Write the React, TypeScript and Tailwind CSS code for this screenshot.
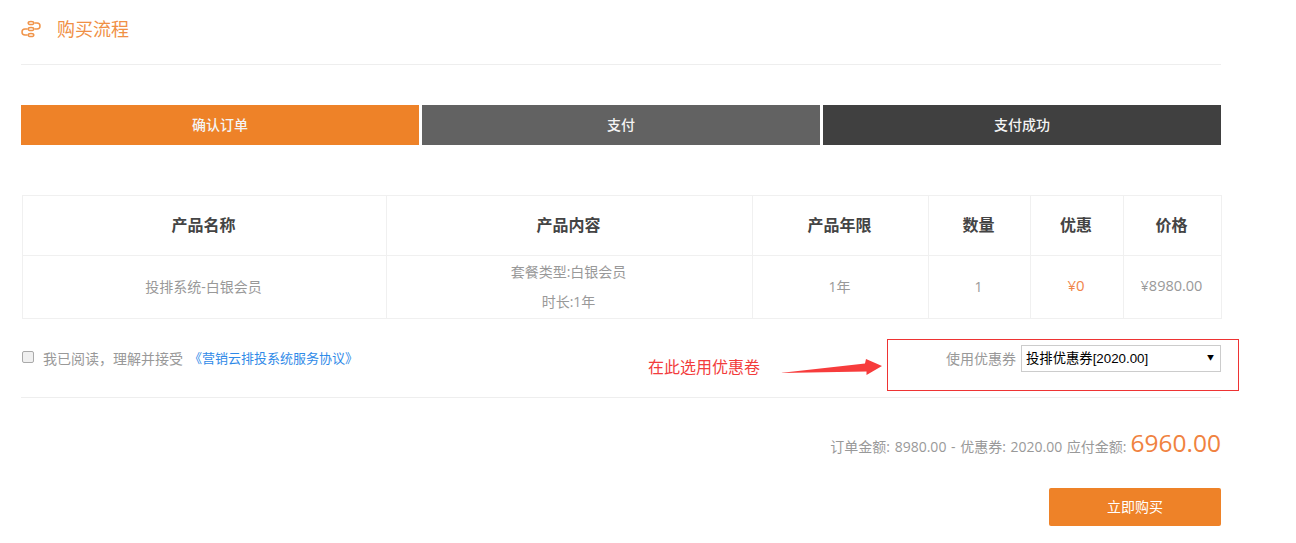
export default function App() {
  const th = "border border-[#f0f0f0] text-[16px] font-bold text-[#444] text-center p-0 pb-[2px] pr-[2px]";
  const td = "border border-[#f0f0f0] text-[14px] text-[#999] text-center p-0 pr-[2px]";
  return (
    <div className="relative w-[1296px] h-[543px] bg-white overflow-hidden font-['Open_Sans','Noto_Sans_CJK_SC',sans-serif]">
      <div className="w-[1200px] ml-[21px]">
        <div className="h-[65px] border-b border-[#eeeeee] flex items-start pt-[15px]">
          <svg width="20" height="20" viewBox="0 0 20 20" fill="none" stroke="#f0944a" strokeWidth="1.5" className="mt-[5px]">
            <ellipse cx="10" cy="3" rx="2.8" ry="1.6" />
            <ellipse cx="10" cy="9" rx="2.8" ry="1.6" />
            <ellipse cx="10" cy="15" rx="2.8" ry="1.6" />
            <path d="M13.5 3H16a3 3 0 0 1 0 6H13.5M6.5 9H4a3 3 0 0 0 0 6H6.5" />
          </svg>
          <span className="ml-[16px] text-[18px] leading-[28px] text-[#f08f45]">购买流程</span>
        </div>
        <div className="mt-[40px] h-[40px] flex gap-[3px] text-[14px] font-medium text-[#f4f4f4] text-center leading-[40px]">
          <div className="w-[398px] bg-[#ee8228]">确认订单</div>
          <div className="w-[398px] bg-[#626262]">支付</div>
          <div className="w-[398px] bg-[#404040]">支付成功</div>
        </div>
        <table className="mt-[50px] ml-[1px] w-[1199px] table-fixed border-collapse">
          <colgroup>
            <col className="w-[364px]" />
            <col className="w-[366px]" />
            <col className="w-[176px]" />
            <col className="w-[102px]" />
            <col className="w-[93px]" />
            <col className="w-[98px]" />
          </colgroup>
          <thead>
            <tr className="h-[60px]">
              <th className={th}>产品名称</th>
              <th className={th}>产品内容</th>
              <th className={th}>产品年限</th>
              <th className={th}>数量</th>
              <th className={th}>优惠</th>
              <th className={th}>价格</th>
            </tr>
          </thead>
          <tbody>
            <tr className="h-[63px]">
              <td className={td + " pb-[2px]"}>投排系统-白银会员</td>
              <td className={td + " leading-[30px]"}>
                <div>套餐类型:白银会员</div>
                <div>时长:1年</div>
              </td>
              <td className={td + " pb-[2px]"}>1年</td>
              <td className={td + " pb-[2px]"}>1</td>
              <td className="border border-[#f0f0f0] text-[15px] text-[#f0854a] text-center p-0 pr-[2px] pb-[3px]">¥0</td>
              <td className="border border-[#f0f0f0] text-[14.5px] text-[#999] text-center p-0 pr-[2px] pb-[2px]">¥8980.00</td>
            </tr>
          </tbody>
        </table>
        <div className="h-[79px] border-b border-[#eeeeee] flex justify-between items-start">
          <label className="flex items-center mt-[30px] text-[14px] text-[#999] leading-[18px]">
            <span className="ml-[1px] w-[12px] h-[12px] border border-[#aaaaaa] rounded-[2px] bg-[#f0f0f0] mb-[4px]" />
            <span className="ml-[9px]">我已阅读，理解并接受</span>
            <span className="ml-[6px] mb-[2px] text-[13px] text-[#2f8ae8]">《营销云排投系统服务协议》</span>
          </label>
          <div className="flex items-center mt-[26px]">
            <span className="text-[14px] text-[#999] mr-[5px]">使用优惠券</span>
            <div className="w-[200px] h-[27px] border border-[#cccccc] flex items-center justify-between pl-[4px] pr-[6px] text-[13.33px] text-black">
              <span className="font-['Liberation_Sans','Noto_Sans_CJK_SC',sans-serif]">投排优惠券[2020.00]</span>
              <span className="text-[7px]">▼</span>
            </div>
          </div>
        </div>
        <div className="mt-[27px] flex justify-end items-baseline text-[#999] text-[14px] [word-spacing:1px] h-[37px]">
          <span>订单金额: 8980.00 - 优惠券: 2020.00 应付金额:</span>
          <span className="ml-[4px] text-[24.5px] text-[#f08240]">6960.00</span>
        </div>
        <div className="mt-[26px] flex justify-end">
          <div className="w-[172px] h-[38px] bg-[#ee8228] rounded-[2px] text-white text-[14px] text-center leading-[38px]">立即购买</div>
        </div>
      </div>
      <div className="absolute left-[887px] top-[339px] w-[352px] h-[52px] border border-[#ee3333]" />
      <div className="absolute left-[648px] top-[356px] text-[16px] leading-[22px] text-[#f23c3c]">在此选用优惠卷</div>
      <svg className="absolute left-[778px] top-[358px]" width="108" height="18" viewBox="0 0 108 18">
        <polygon points="2,15 87,5.5 88,1 104,8 88.5,17 88.5,13.5" fill="#f73c3c" />
      </svg>
    </div>
  );
}
